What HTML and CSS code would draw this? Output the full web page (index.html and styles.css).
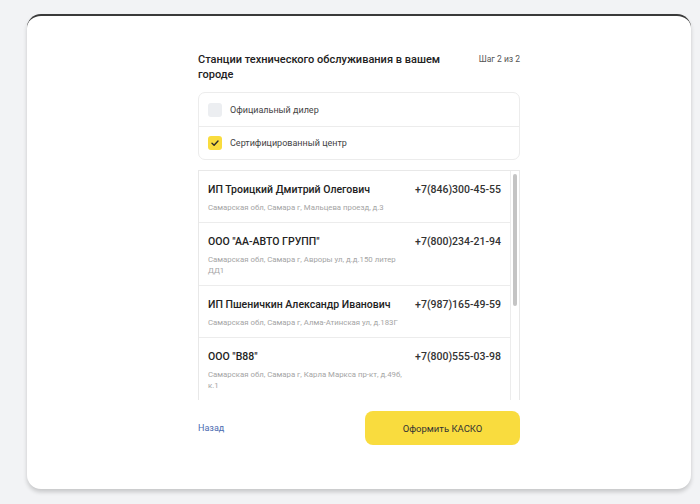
FILE: index.html
```html
<!DOCTYPE html>
<html lang="ru">
<head>
<meta charset="utf-8">
<title>Станции технического обслуживания</title>
<link rel="stylesheet" href="styles.css">
</head>
<body>
<div class="card">
  <div class="content">
    <div class="head">
      <h1 class="title">Станции технического обслуживания в вашем городе</h1>
      <div class="step">Шаг 2 из 2</div>
    </div>

    <div class="filters">
      <label class="filter">
        <span class="box"></span>
        <span class="filter-label">Официальный дилер</span>
      </label>
      <label class="filter">
        <span class="box box-on">
          <svg viewBox="0 0 14 14" width="14" height="14"><path d="M4 7.2 L6.1 9.2 L10 5" fill="none" stroke="#2b2b2b" stroke-width="1.4" stroke-linecap="round" stroke-linejoin="round"/></svg>
        </span>
        <span class="filter-label">Сертифицированный центр</span>
      </label>
    </div>

    <div class="list">
      <div class="items">
        <div class="item">
          <div class="row">
            <div class="name">ИП Троицкий Дмитрий Олегович</div>
            <div class="phone">+7(846)300-45-55</div>
          </div>
          <div class="addr">Самарская обл, Самара г, Мальцева проезд, д.3</div>
        </div>
        <div class="item">
          <div class="row">
            <div class="name">ООО "АА-АВТО ГРУПП"</div>
            <div class="phone">+7(800)234-21-94</div>
          </div>
          <div class="addr">Самарская обл, Самара г, Авроры ул, д.д.150 литер ДД1</div>
        </div>
        <div class="item">
          <div class="row">
            <div class="name">ИП Пшеничкин Александр Иванович</div>
            <div class="phone">+7(987)165-49-59</div>
          </div>
          <div class="addr">Самарская обл, Самара г, Алма-Атинская ул, д.183Г</div>
        </div>
        <div class="item">
          <div class="row">
            <div class="name">ООО "В88"</div>
            <div class="phone">+7(800)555-03-98</div>
          </div>
          <div class="addr">Самарская обл, Самара г, Карла Маркса пр-кт, д.49б, к.1</div>
        </div>
      </div>
      <div class="track"><div class="thumb"></div></div>
    </div>

    <div class="actions">
      <a class="back" href="#">Назад</a>
      <button class="submit" type="button">Оформить КАСКО</button>
    </div>
  </div>
</div>
</body>
</html>
```

FILE: styles.css
```css
* { box-sizing: border-box; }

html, body {
  margin: 0;
  height: 100%;
}

body {
  background: #f2f3f5;
  font-family: Roboto, "Noto Sans", Arial, sans-serif;
  color: #222;
  padding: 14px 9px 0 27px;
}

.card {
  height: 475px;
  background: #fff;
  border-top: 2px solid #3a3a3a;
  border-radius: 14px;
  box-shadow: 0 3px 4px rgba(0, 0, 0, 0.18);
  padding-top: 36px;
}

.content {
  width: 322px;
  margin: 0 auto;
}

.head {
  display: flex;
  justify-content: space-between;
  align-items: flex-start;
}

.title {
  margin: 0;
  width: 262px;
  font-size: 11px;
  font-weight: 500;
  line-height: 15px;
  color: #222;
}

.step {
  font-size: 8.5px;
  color: #555;
  line-height: 15px;
}

.filters {
  margin-top: 10px;
  border: 1px solid #ececec;
  border-radius: 7px;
}

.filter {
  display: flex;
  align-items: center;
  height: 33px;
  padding-left: 9px;
}

.filter + .filter {
  border-top: 1px solid #ececec;
}

.box {
  width: 14px;
  height: 14px;
  border-radius: 3px;
  background: #eceef1;
  display: flex;
}

.box-on {
  background: #f9dc3e;
}

.filter-label {
  margin-left: 8px;
  font-size: 9px;
  color: #444;
}

.list {
  margin-top: 10px;
  height: 230px;
  display: flex;
  border: 1px solid #e8e8e8;
  border-bottom: none;
}

.items {
  flex: 1;
  overflow: hidden;
}

.item {
  padding: 11px 9px 9px 9px;
  border-bottom: 1px solid #ececec;
}

.row {
  display: flex;
  justify-content: space-between;
  align-items: center;
  height: 14px;
}

.name {
  font-size: 10.5px;
  font-weight: 500;
  color: #222;
}

.phone {
  font-size: 10.5px;
  font-weight: 500;
  color: #333;
}

.addr {
  margin-top: 6px;
  width: 200px;
  font-size: 7.8px;
  line-height: 11px;
  color: #a5a5a5;
}

.track {
  width: 9px;
  border-left: 1px solid #ececec;
  padding: 3px 2px 0 2px;
}

.thumb {
  height: 132px;
  border-radius: 2px;
  background: #c4c4c4;
}

.actions {
  margin-top: 11px;
  display: flex;
  justify-content: space-between;
  align-items: center;
}

.back {
  font-size: 9px;
  color: #4a6bb0;
  text-decoration: none;
}

.submit {
  width: 155px;
  height: 34px;
  border: none;
  border-radius: 8px;
  background: #f9dc3e;
  font-family: inherit;
  font-size: 9.5px;
  color: #333;
}
```
